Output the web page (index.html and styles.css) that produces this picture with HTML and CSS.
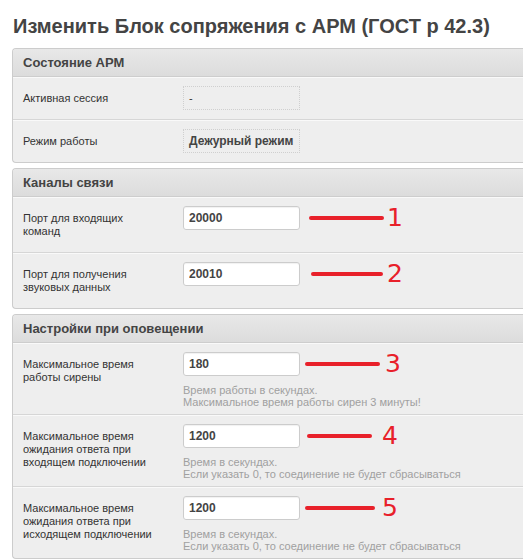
FILE: index.html
```html
<!DOCTYPE html>
<html lang="ru">
<head>
<meta charset="utf-8">
<link rel="stylesheet" href="styles.css">
</head>
<body>
<h1 class="title">Изменить Блок сопряжения с АРМ (ГОСТ р 42.3)</h1>

<section class="box">
  <div class="box-head">Состояние АРМ</div>
  <div class="row">
    <div class="label">Активная сессия</div>
    <div class="field"><div class="value">-</div></div>
  </div>
  <div class="row">
    <div class="label">Режим работы</div>
    <div class="field"><div class="value value-bold">Дежурный режим</div></div>
  </div>
</section>

<section class="box">
  <div class="box-head">Каналы связи</div>
  <div class="row">
    <div class="label">Порт для входящих команд</div>
    <div class="field">
      <div class="control"><input class="input" type="text" value="20000"><span class="mark m1"></span><span class="num">1</span></div>
    </div>
  </div>
  <div class="row">
    <div class="label">Порт для получения звуковых данных</div>
    <div class="field">
      <div class="control"><input class="input" type="text" value="20010"><span class="mark m2"></span><span class="num">2</span></div>
    </div>
  </div>
</section>

<section class="box">
  <div class="box-head">Настройки при оповещении</div>
  <div class="row">
    <div class="label">Максимальное время работы сирены</div>
    <div class="field">
      <div class="control"><input class="input" type="text" value="180"><span class="mark m3"></span><span class="num">3</span></div>
      <div class="hint">Время работы в секундах.<br>Максимальное время работы сирен 3 минуты!</div>
    </div>
  </div>
  <div class="row">
    <div class="label">Максимальное время ожидания ответа при входящем подключении</div>
    <div class="field">
      <div class="control"><input class="input" type="text" value="1200"><span class="mark m4"></span><span class="num">4</span></div>
      <div class="hint">Время в секундах.<br>Если указать 0, то соединение не будет сбрасываться</div>
    </div>
  </div>
  <div class="row">
    <div class="label">Максимальное время ожидания ответа при исходящем подключении</div>
    <div class="field">
      <div class="control"><input class="input" type="text" value="1200"><span class="mark m5"></span><span class="num">5</span></div>
      <div class="hint">Время в секундах.<br>Если указать 0, то соединение не будет сбрасываться</div>
    </div>
  </div>
</section>
</body>
</html>
```

FILE: styles.css
```css
html {
  overflow: hidden;
}
body {
  margin: 0;
  background: #ffffff;
  font-family: "Liberation Sans", Arial, sans-serif;
  color: #333333;
}
.title {
  margin: 0 0 10px 0;
  padding: 14px 0 0 13px;
  font-size: 20px;
  line-height: 24px;
  font-weight: bold;
  color: #444444;
  white-space: nowrap;
}
.box {
  margin: 0 0 5px 12px;
  border: 1px solid #cccccc;
  border-right: 0;
  border-radius: 4px 0 0 4px;
  background: #eeeeee;
  overflow: hidden;
}
.box-head {
  height: 27px;
  line-height: 27px;
  padding-left: 10px;
  font-size: 13px;
  font-weight: bold;
  color: #444444;
  background: linear-gradient(#e8e8e8, #dcdcdc);
  border-bottom: 1px solid #cdcdcd;
}
.row {
  display: grid;
  grid-template-columns: 160px 1fr;
  padding: 8px 10px 6px;
  border-top: 1px solid #f9f9f9;
  border-bottom: 1px solid #d6d6d6;
}
.row:last-child {
  border-bottom: 0;
}
.label {
  width: 140px;
  padding: 6px 0 8px;
  font-size: 11px;
  line-height: 13px;
  color: #333333;
}
.field {
  display: flex;
  flex-direction: column;
}
.value {
  box-sizing: border-box;
  width: 117px;
  height: 24px;
  padding: 0 5px;
  border: 1px dotted #cfcfcf;
  font-size: 11px;
  line-height: 22px;
  color: #333333;
}
.value-bold {
  font-size: 12px;
  font-weight: bold;
  color: #444444;
}
.control {
  display: flex;
  align-items: center;
  height: 24px;
}
.input {
  box-sizing: border-box;
  width: 117px;
  height: 24px;
  margin: 0;
  padding: 0 5px;
  border: 1px solid #cccccc;
  border-radius: 3px;
  background: #ffffff;
  box-shadow: inset 0 1px 1px rgba(0, 0, 0, 0.06);
  font-family: "Liberation Sans", Arial, sans-serif;
  font-size: 12px;
  font-weight: bold;
  color: #444444;
  outline: none;
}
.mark {
  height: 4px;
  border-radius: 2px;
  background: #e8202a;
}
.m1 { width: 75px; margin-left: 9px; margin-right: 3px; }
.m2 { width: 72px; margin-left: 11px; margin-right: 4px; }
.m3 { width: 75px; margin-left: 5px; margin-right: 5px; }
.m4 { width: 65px; margin-left: 7px; margin-right: 10px; }
.m5 { width: 70px; margin-left: 5px; margin-right: 7px; }
.num {
  font-family: "DejaVu Sans", sans-serif;
  font-size: 25px;
  line-height: 24px;
  font-weight: normal;
  color: #e8202a;
}
.hint {
  margin-top: 8px;
  font-size: 11px;
  line-height: 12px;
  color: #a0a0a0;
  white-space: nowrap;
}
```
